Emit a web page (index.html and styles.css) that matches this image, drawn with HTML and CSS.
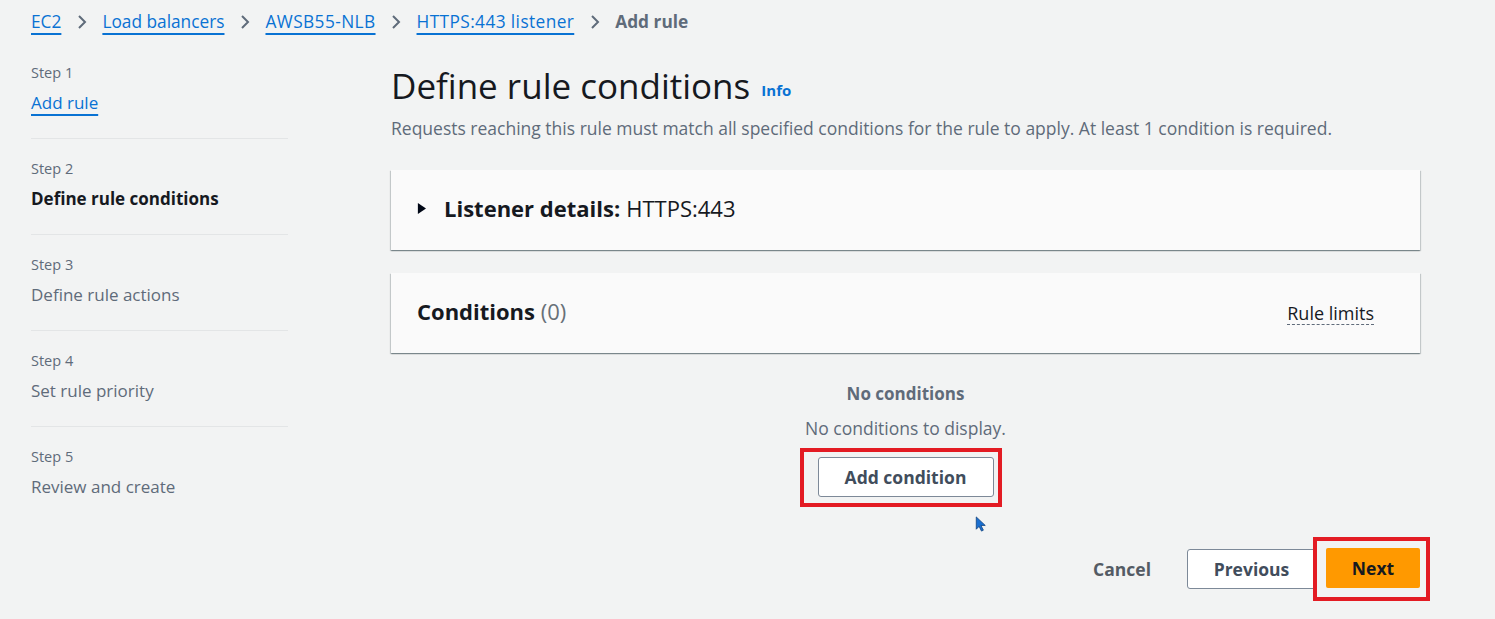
FILE: index.html
```html
<!DOCTYPE html>
<html>
<head>
<meta charset="utf-8">
<link rel="stylesheet" href="styles.css">
</head>
<body>
<nav class="crumbs">
  <a class="crumb">EC2</a>
  <svg class="chev" viewBox="0 0 10 16"><path d="M2 2l6 6-6 6" fill="none" stroke="#5f6b7a" stroke-width="2"/></svg>
  <a class="crumb">Load balancers</a>
  <svg class="chev" viewBox="0 0 10 16"><path d="M2 2l6 6-6 6" fill="none" stroke="#5f6b7a" stroke-width="2"/></svg>
  <a class="crumb wide">AWSB55-NLB</a>
  <svg class="chev" viewBox="0 0 10 16"><path d="M2 2l6 6-6 6" fill="none" stroke="#5f6b7a" stroke-width="2"/></svg>
  <a class="crumb wide">HTTPS:443 listener</a>
  <svg class="chev" viewBox="0 0 10 16"><path d="M2 2l6 6-6 6" fill="none" stroke="#5f6b7a" stroke-width="2"/></svg>
  <span class="crumb-cur">Add rule</span>
</nav>
<div class="layout">
  <aside class="steps">
    <div class="step first">
      <div class="step-num">Step 1</div>
      <a class="step-link">Add rule</a>
    </div>
    <div class="step">
      <div class="step-num">Step 2</div>
      <div class="step-active">Define rule conditions</div>
    </div>
    <div class="step">
      <div class="step-num">Step 3</div>
      <div class="step-off">Define rule actions</div>
    </div>
    <div class="step">
      <div class="step-num">Step 4</div>
      <div class="step-off">Set rule priority</div>
    </div>
    <div class="step">
      <div class="step-num">Step 5</div>
      <div class="step-off">Review and create</div>
    </div>
  </aside>
  <main class="main">
    <h1 class="title">Define rule conditions <span class="info">Info</span></h1>
    <p class="desc">Requests reaching this rule must match all specified conditions for the rule to apply. At least 1 condition is required.</p>
    <section class="card">
      <svg class="caret" viewBox="0 0 10 12"><path d="M1 0l9 6-9 6z" fill="#000716"/></svg>
      <span class="card-h">Listener details:</span> <span class="card-v">HTTPS:443</span>
    </section>
    <section class="card cond">
      <div><span class="card-h">Conditions</span> <span class="count">(0)</span></div>
      <span class="limits">Rule limits</span>
    </section>
    <div class="empty">
      <div class="empty-h">No conditions</div>
      <div class="empty-t">No conditions to display.</div>
      <div class="hl hl-add"><button class="btn">Add condition</button></div>
      <svg class="cursor" viewBox="0 0 12 18"><path d="M1 1v13l3-3 2.5 5 2-1-2.5-5h4.5z" fill="#1a6fd0" stroke="#0a3d7a" stroke-width="0.8"/></svg>
    </div>
    <div class="actions">
      <button class="link-btn">Cancel</button>
      <button class="btn prev">Previous</button>
      <div class="hl hl-next"><button class="btn primary">Next</button></div>
    </div>
  </main>
</div>
</body>
</html>
```
FILE: styles.css
```css
* { box-sizing: border-box; }
body {
  margin: 0;
  background: #f2f3f3;
  font-family: "Open Sans", "Noto Sans", sans-serif;
  color: #16191f;
  width: 1495px;
  height: 619px;
  overflow: hidden;
}
.crumbs {
  display: flex;
  align-items: center;
  gap: 15.5px;
  padding: 2px 0 0 31px;
  height: 42px;
  font-size: 17.3px;
  line-height: 24px;
}
.crumb {
  color: #0972d3;
  text-decoration: underline;
  text-underline-offset: 5px;
  text-decoration-thickness: 1.5px;
}
.crumb.wide { letter-spacing: 0.4px; }
.crumb-cur { color: #5f6b7a; font-weight: 700; }
.chev { width: 10px; height: 16px; }
.layout {
  display: flex;
  padding-left: 31px;
}
.steps {
  width: 257px;
}
.step {
  border-top: 1px solid #e3e5e6;
  height: 96px;
  padding-top: 20px;
}
.step.first { border-top-color: transparent; }
.step-num {
  font-size: 14.5px;
  color: #5f6b7a;
  line-height: 20px;
  margin-bottom: 8px;
}
.step-link, .step-active, .step-off {
  font-size: 17px;
  line-height: 24px;
}
.step-link {
  color: #0972d3;
  text-decoration: underline;
  text-underline-offset: 5px;
  text-decoration-thickness: 1.5px;
}
.step-active { font-weight: 700; color: #16191f; }
.step-off { color: #5f6b7a; }
.main {
  margin-left: 103px;
  width: 1029px;
  position: relative;
}
.title {
  margin: 23px 0 0;
  font-size: 35px;
  font-weight: 400;
  line-height: 42px;
  color: #16191f;
}
.info {
  font-size: 15px;
  font-weight: 700;
  color: #0972d3;
  vertical-align: middle;
  margin-left: 2px;
}
.desc {
  margin: 5px 0 0;
  font-size: 17.5px;
  color: #5f6b7a;
  line-height: 24px;
}
.card {
  background: #fafafa;
  box-shadow: 0 1px 1px 0 rgba(0,28,36,0.3), 1px 1px 1px 0 rgba(0,28,36,0.15), -1px 1px 1px 0 rgba(0,28,36,0.15);
  height: 80px;
  margin-top: 30px;
  display: flex;
  align-items: center;
  padding: 0 26px 3px;
  font-size: 22px;
}
.caret { width: 9px; height: 11px; margin-right: 18px; }
.card-h { font-weight: 700; color: #16191f; }
.card-v { margin-left: 6px; color: #16191f; }
.cond {
  margin-top: 23px;
  justify-content: space-between;
  padding-right: 46px;
}
.count { color: #687078; font-weight: 400; }
.limits {
  font-size: 18px;
  color: #16191f;
  border-bottom: 1px dashed #5f6b7a;
  line-height: 22px;
  margin-top: 4px;
}
.empty {
  display: flex;
  flex-direction: column;
  align-items: center;
  padding-top: 30px;
  position: relative;
}
.empty-h {
  font-size: 17px;
  font-weight: 700;
  color: #5f6b7a;
  line-height: 22px;
}
.empty-t {
  font-size: 17.5px;
  color: #5f6b7a;
  line-height: 22px;
  margin-top: 12px;
}
.hl {
  border: 4px solid #e31b23;
  display: flex;
}
.hl-add {
  margin-top: 9px;
  width: 202px;
  height: 59px;
  margin-right: 10px;
  padding: 5px 4px 0 14px;
}
.btn {
  font-family: inherit;
  font-size: 17.5px;
  font-weight: 700;
  color: #414d5c;
  background: #fff;
  border: 1.5px solid #7d8998;
  border-radius: 3px;
  height: 40px;
  cursor: pointer;
}
.hl-add .btn { width: 176px; }
.cursor {
  position: absolute;
  left: 584px;
  top: 163px;
  width: 12px;
  height: 17px;
}
.actions {
  display: flex;
  justify-content: flex-end;
  align-items: center;
  margin-top: 30px;
  margin-right: -10px;
}
.link-btn {
  font-family: inherit;
  font-size: 17.5px;
  font-weight: 700;
  color: #545b64;
  background: none;
  border: none;
  margin-right: 36px;
  padding: 0;
  margin-top: 1px;
}
.prev { width: 129px; margin-top: 1px; }
.hl-next {
  width: 117px;
  height: 64px;
  margin-left: -3px;
  padding: 7px 0 0 9px;
}
.primary {
  background: #ff9900;
  border: none;
  color: #16191f;
  width: 94px;
  border-radius: 2px;
}
```
